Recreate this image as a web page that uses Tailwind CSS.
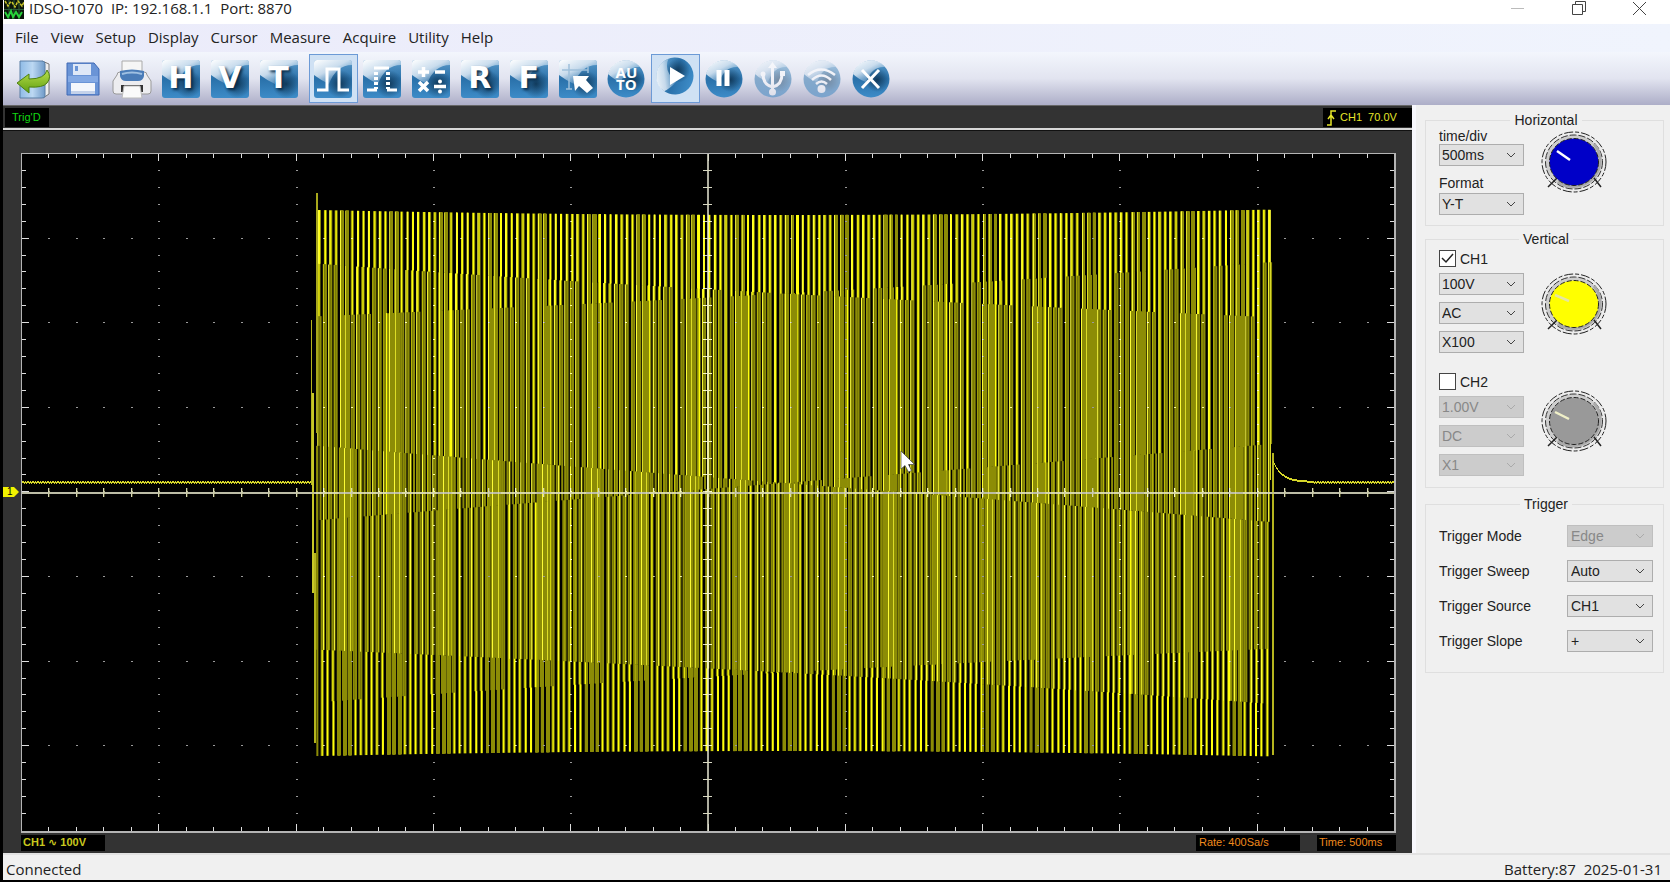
<!DOCTYPE html>
<html lang="en">

<head>
    <meta charset="UTF-8">
    <meta name="viewport" content="width=device-width, initial-scale=1.0">
    <title>IDSO-1070</title>
    <script src="https://cdn.jsdelivr.net/npm/@tailwindcss/browser@4"></script>
</head>

<body class="h-screen flex flex-col overflow-hidden bg-black pl-[3px] pb-[2px] font-['Open_Sans',sans-serif] text-[#222]">
    <!-- Shared gradients and shapes for the toolbar icons -->
    <svg class="absolute w-0 h-0" aria-hidden="true">
        <defs>
            <linearGradient id="blue" x1="0" y1="0" x2="0" y2="1">
                <stop offset="0" stop-color="#5a9aca" />
                <stop offset="0.5" stop-color="#2a71aa" />
                <stop offset="1" stop-color="#3d8cc8" />
            </linearGradient>
            <linearGradient id="gloss" x1="0" y1="0" x2="0.8" y2="1">
                <stop offset="0" stop-color="#fff" />
                <stop offset="0.45" stop-color="#dfeaf5" stop-opacity="0.85" />
                <stop offset="1" stop-color="#8ab8dc" stop-opacity="0" />
            </linearGradient>
            <radialGradient id="shade">
                <stop offset="0" stop-color="#0a2c48" stop-opacity="0.8" />
                <stop offset="1" stop-color="#0a2c48" stop-opacity="0" />
            </radialGradient>
            <linearGradient id="door" x1="0" y1="0" x2="1" y2="0">
                <stop offset="0" stop-color="#8fbbe6" />
                <stop offset="0.5" stop-color="#bcd8f2" />
                <stop offset="1" stop-color="#6f9ac8" />
            </linearGradient>
            <linearGradient id="green" x1="0" y1="0" x2="0" y2="1">
                <stop offset="0" stop-color="#b9e04a" />
                <stop offset="1" stop-color="#5f9e12" />
            </linearGradient>
            <symbol id="tile" viewBox="0 0 38 38">
                <rect x="0" y="0" width="38" height="38" rx="3" fill="url(#blue)" />
                <circle cx="26" cy="24" r="14" fill="url(#shade)" />
                <path d="M0 15V3Q0 0 3 0H35Q38 0 38 3V5Q22 5 15 24Q8 21 0 15Z" fill="url(#gloss)" />
            </symbol>
            <symbol id="disc" viewBox="0 0 38 38">
                <circle cx="19" cy="19" r="18.500" fill="url(#blue)" />
                <circle cx="25" cy="20" r="12" fill="url(#shade)" />
                <path d="M1 14A18.500 18.500 0 0 1 33 7Q20 6 14 22Q6 19 1 14Z" fill="url(#gloss)" />
            </symbol>
            <symbol id="knob" viewBox="0 0 68 68">
                <ellipse cx="34" cy="34" rx="32" ry="30" fill="#ececec" stroke="#222" stroke-dasharray="9 2 4 2" />
                <ellipse cx="34" cy="34" rx="28.500" ry="27" fill="#cdcdcd" stroke="#333" stroke-dasharray="7 2" />
                <path d="M54 16A27 26 0 0 1 18 54" fill="none" stroke="#aaa" stroke-width="3" />
                <path d="M17 50L8 59M54 50L61 59" stroke="#222" stroke-width="1.500" />
                <ellipse cx="34" cy="34" rx="24.500" ry="23.500" fill="currentColor" stroke="#222" stroke-dasharray="5 2" />
            </symbol>
        </defs>
    </svg>

    <!-- Title bar -->
    <header class="h-6 shrink-0 flex items-start justify-between bg-white">
        <div class="flex">
            <svg class="w-5 h-[19px] mx-px" viewBox="0 0 20 19" fill="none">
                <rect width="20" height="19" fill="#0b160b" />
                <path d="M0 9.500H20M10 0V19M5 0V19M15 0V19" stroke="#2c5a38" />
                <path d="M1 1L4 6L7 1M8 2L11 7L14 1L18 6L20 2" stroke="#c9c52a" stroke-width="1.500" stroke-dasharray="3 1" />
                <path d="M1 12L4 17L7 11L9 17L12 12L15 17L18 12" stroke="#28d23a" stroke-width="2" />
            </svg>
            <h1 class="pl-1 text-[15px] leading-[17px] whitespace-pre">IDSO-1070  IP: 192.168.1.1  Port: 8870</h1>
        </div>
        <div class="flex">
            <button class="w-[61px] h-4 grid place-items-center" aria-label="Minimize">
                <svg class="w-4 h-4" viewBox="0 0 16 16"><path d="M1 8.500H14" stroke="#bbb" /></svg>
            </button>
            <button class="w-[61px] h-4 grid place-items-center" aria-label="Restore">
                <svg class="w-4 h-4" viewBox="0 0 16 16" fill="none" stroke="#444"><path d="M1.500 4.500H11.500V14.500H1.500ZM4.500 4.500V1.500H14.500V11.500H11.500" /></svg>
            </button>
            <button class="w-[61px] h-4 grid place-items-center" aria-label="Close">
                <svg class="w-4 h-4" viewBox="0 0 16 16" stroke="#444"><path d="M1 2L14 15M14 2L1 15" /></svg>
            </button>
        </div>
    </header>

    <!-- Menu -->
    <nav class="h-7 shrink-0 flex items-center gap-3 pl-3 pb-[2px] bg-linear-to-r from-[#ebebfa] to-[#f0f4fd] text-[15px]">
        <button>File</button>
        <button>View</button>
        <button>Setup</button>
        <button>Display</button>
        <button>Cursor</button>
        <button>Measure</button>
        <button>Acquire</button>
        <button>Utility</button>
        <button>Help</button>
    </nav>

    <!-- Toolbar -->
    <div class="h-[53px] shrink-0 flex items-center pl-[7px] bg-linear-to-b from-[#f3f6fd] via-[#e2e4f0] to-[#adaec8] text-white">
        <div class="w-[293px] h-[49px] grid grid-cols-6">
            <button class="grid place-items-center" aria-label="Exit">
                <svg class="w-9 h-10" viewBox="0 0 36 40">
                    <path d="M26 2L33 5V35L27 39Z" fill="#eee" stroke="#777" />
                    <path d="M4 2H26Q29 2 29 5V37Q29 39 26 39H4Z" fill="url(#door)" stroke="#5b7fa5" />
                    <path d="M1 24L13 15V20Q29 20 31 11Q36 18 31 24Q27 29 13 28V34Z" fill="url(#green)" stroke="#4d8010" />
                </svg>
            </button>
            <button class="grid place-items-center" aria-label="Save">
                <svg class="w-9 h-9" viewBox="0 0 36 36">
                    <path d="M2 2H29L34 8V34H2Z" fill="#6a94d6" stroke="#3f68b4" />
                    <path d="M8 3H26V14H8Z" fill="#dfe8f7" />
                    <path d="M10 5H13V10H10Z" fill="#6a94d6" />
                    <path d="M3 15H33V21H3Z" fill="#83a9e4" />
                    <path d="M6 22H30V33H6Z" fill="#f4f7fc" />
                    <path d="M6 30H30V33H6Z" fill="#c4d2ea" />
                </svg>
            </button>
            <button class="grid place-items-center" aria-label="Print">
                <svg class="w-10 h-10" viewBox="0 0 40 40">
                    <path d="M10 2H30V18H10Z" fill="#f6f6f6" stroke="#aaa" />
                    <path d="M5 16Q5 13 8 13H32Q35 13 35 16L39 22V32Q39 35 36 35H4Q1 35 1 32V22Z" fill="#ededf0" stroke="#999" />
                    <path d="M8 12Q20 9 32 12V17Q31 22 26 22H14Q9 22 8 17Z" fill="#4a7cb8" />
                    <path d="M10 15Q20 12 30 15" stroke="#9fc0e2" stroke-width="2" fill="none" />
                    <path d="M9 26H31V33H9Z" fill="#333" />
                    <path d="M12 27H28L30 39H10Z" fill="#fafafa" stroke="#bbb" />
                </svg>
            </button>
            <button class="relative grid place-items-center" aria-label="Horizontal">
                <svg class="w-[38px] h-[38px]"><use href="#tile" /></svg>
                <span class="absolute font-['DejaVu_Sans'] text-3xl leading-none font-bold pb-[2px] text-shadow-[2px_2px_3px_#0a2c48]">H</span>
            </button>
            <button class="relative grid place-items-center" aria-label="Vertical">
                <svg class="w-[38px] h-[38px]"><use href="#tile" /></svg>
                <span class="absolute font-['DejaVu_Sans'] text-3xl leading-none font-bold pb-[2px] text-shadow-[2px_2px_3px_#0a2c48]">V</span>
            </button>
            <button class="relative grid place-items-center" aria-label="Trigger">
                <svg class="w-[38px] h-[38px]"><use href="#tile" /></svg>
                <span class="absolute font-['DejaVu_Sans'] text-3xl leading-none font-bold pb-[2px] text-shadow-[2px_2px_3px_#0a2c48]">T</span>
            </button>
        </div>
        <div class="w-[586px] h-[49px] ml-[6px] grid grid-cols-12">
            <button class="grid place-items-center border border-[#6c9ad6] bg-[#cfe1f4]" aria-label="Line display">
                <svg class="w-[38px] h-[38px]" viewBox="0 0 38 38">
                    <use href="#tile" />
                    <path d="M3 30H13V9H25V30H35" fill="none" stroke="#fff" stroke-width="3" />
                </svg>
            </button>
            <button class="grid place-items-center" aria-label="Dot display">
                <svg class="w-[38px] h-[38px]" viewBox="0 0 38 38">
                    <use href="#tile" />
                    <path d="M4 30H14M24 30H34M11 8H26" stroke="#fff" stroke-width="3" />
                    <path d="M13 12V29M25 12V29" stroke="#fff" stroke-width="4" stroke-dasharray="3 2" />
                </svg>
            </button>
            <button class="grid place-items-center" aria-label="Math">
                <svg class="w-[38px] h-[38px]" viewBox="0 0 38 38">
                    <use href="#tile" />
                    <path d="M6 12H17M11.500 7V17M23 12H33M7 22L16 31M16 22L7 31M22 26.500H34" stroke="#fff" stroke-width="3.500" />
                    <circle cx="28" cy="21.500" r="2" fill="#fff" />
                    <circle cx="28" cy="31.500" r="2" fill="#fff" />
                </svg>
            </button>
            <button class="relative grid place-items-center" aria-label="Reference">
                <svg class="w-[38px] h-[38px]"><use href="#tile" /></svg>
                <span class="absolute font-['DejaVu_Sans'] text-3xl leading-none font-bold pb-[2px] text-shadow-[2px_2px_3px_#0a2c48]">R</span>
            </button>
            <button class="relative grid place-items-center" aria-label="FFT">
                <svg class="w-[38px] h-[38px]"><use href="#tile" /></svg>
                <span class="absolute font-['DejaVu_Sans'] text-3xl leading-none font-bold pb-[2px] text-shadow-[2px_2px_3px_#0a2c48]">F</span>
            </button>
            <button class="grid place-items-center" aria-label="Cursor">
                <svg class="w-[38px] h-[38px]" viewBox="0 0 38 38">
                    <use href="#tile" />
                    <path d="M3 10H29M10 4V29M29 7V13M7 29H13" stroke="#9fc0da" stroke-width="1.500" />
                    <path d="M14 16L30 16L27 20L34 28L28 33L20 26L16 31Z" fill="#fff" />
                </svg>
            </button>
            <button class="relative grid place-items-center" aria-label="Auto">
                <svg class="w-[38px] h-[38px]"><use href="#disc" /></svg>
                <span class="absolute text-[15px] leading-3 font-bold pb-[2px]">AU<br>TO</span>
            </button>
            <button class="grid place-items-start justify-center pt-[2px] border border-[#6c9ad6] bg-[#cfe1f4]" aria-label="Run">
                <svg class="w-[38px] h-[38px]" viewBox="0 0 38 38">
                    <use href="#disc" transform="rotate(-70 19 19)" />
                    <path d="M14 10L29 19L14 28Z" fill="#fff" />
                </svg>
            </button>
            <button class="grid place-items-center" aria-label="Pause">
                <svg class="w-[38px] h-[38px]" viewBox="0 0 38 38">
                    <use href="#disc" />
                    <path d="M14 10V26M22 10V26" stroke="#fff" stroke-width="5" />
                </svg>
            </button>
            <button class="grid place-items-center opacity-50" aria-label="USB">
                <svg class="w-[38px] h-[38px]" viewBox="0 0 38 38" fill="none">
                    <use href="#disc" />
                    <path d="M18.500 6V32M18.500 27Q9 25 9 14M18.500 27Q28 25 28 14" stroke="#fff" stroke-width="3" />
                    <path d="M14 8L18.500 2L23 8ZM26 11H31V16H26Z" fill="#fff" />
                    <circle cx="9" cy="14" r="2.500" fill="#fff" />
                    <circle cx="18.500" cy="32" r="3.500" fill="#fff" />
                </svg>
            </button>
            <button class="grid place-items-center opacity-50" aria-label="WiFi">
                <svg class="w-[38px] h-[38px]" viewBox="0 0 38 38" fill="none">
                    <use href="#disc" />
                    <path d="M5 15Q18 4 32 15M9 20Q18.500 11 28 20M13 24Q18.500 19 24 24" stroke="#fff" stroke-width="2.500" />
                    <circle cx="18.500" cy="29" r="4" fill="#fff" />
                </svg>
            </button>
            <button class="grid place-items-center" aria-label="Disconnect">
                <svg class="w-[38px] h-[38px]" viewBox="0 0 38 38">
                    <use href="#disc" />
                    <path d="M10 10L27 28M27 10L10 28" stroke="#fff" stroke-width="3" />
                </svg>
            </button>
        </div>
    </div>

    <main class="flex-1 min-h-0 flex">
        <!-- Oscilloscope -->
        <section class="flex-1 min-w-0 flex flex-col bg-[#333] font-['Liberation_Sans',sans-serif] text-[11px]">
            <div class="h-[23px] shrink-0 flex justify-between pl-[2px] pt-[2px] pb-px border-t border-[#666]">
                <span class="w-11 bg-black pl-[7px] leading-[19px] text-[#12d812]">Trig'D</span>
                <span class="w-[89px] bg-black flex items-center pl-1 text-[#e6e62a]">
                    <svg class="w-[10px] h-4 mr-[3px]" viewBox="0 0 10 16" fill="none" stroke="#e6e62a" stroke-width="1.500">
                        <path d="M0 15H4V1H9M1 9L4 5L7 9" />
                    </svg>
                    CH1&nbsp; 70.0V
                </span>
            </div>
            <div class="h-[3px] shrink-0 bg-[#d8d8d8] border-b border-[#111]"></div>
            <div class="relative flex-1 min-h-0 flex flex-col pl-[18px] pr-4 pt-[22px]">
                <canvas id="screen" class="flex-1 min-h-0 w-full bg-black" width="1375" height="680"></canvas>
                <div class="h-[18px] shrink-0 mt-[2px] pb-[2px] flex text-[#f08a1c]">
                    <span class="w-[84px] bg-black pl-[2px] leading-[15px] font-bold text-[#c8c81e]">CH1 <span class="font-['DejaVu_Sans']">∿</span> 100V</span>
                    <span class="w-[104px] ml-auto bg-black pl-[3px] leading-[15px]">Rate: 400Sa/s</span>
                    <span class="w-[79px] ml-[17px] bg-black pl-[2px] leading-[15px]">Time: 500ms</span>
                </div>
                <!-- Channel 1 ground marker -->
                <div class="absolute left-0 top-[355px] w-4 h-3">
                    <svg class="absolute w-4 h-3" viewBox="0 0 16 12"><path d="M0 1H11L16 6L11 11H0Z" fill="#f2f200" /></svg>
                    <span class="absolute left-1 text-[10px] leading-3 text-black">1</span>
                </div>
                <!-- Mouse pointer -->
                <svg class="absolute left-[897px] top-[319px] w-4 h-6" viewBox="0 0 16 24">
                    <path d="M1 1V19L5 15.500L8.500 22L11.500 20.500L8.500 14.500H14.500Z" fill="#fff" stroke="#444" stroke-width="0.700" />
                </svg>
            </div>
        </section>

        <!-- Control panel -->
        <aside class="w-[258px] shrink-0 bg-[#f0f0f0] border-l-4 border-[#f8f8fd] pl-[9px] pr-[6px] pt-[7px] font-['Liberation_Sans',sans-serif] text-sm leading-4">
            <fieldset class="h-[114px] border border-[#dfdfdf] pl-[13px] pr-[10px] flex">
                <legend class="mx-auto px-1">Horizontal</legend>
                <div class="w-[85px] shrink-0">
                    <label for="timeDiv" class="block">time/div</label>
                    <div class="relative h-[22px]">
                        <select id="timeDiv" class="appearance-none w-full h-full border border-[#adadad] bg-[#e1e1e1] pl-[2px]"><option>500ms</option></select>
                        <svg class="absolute right-2 top-2 w-[10px] h-[6px] pointer-events-none" viewBox="0 0 10 6" fill="none" stroke="#444"><path d="M1 1L5 5L9 1" /></svg>
                    </div>
                    <label for="format" class="block mt-[9px]">Format</label>
                    <div class="relative h-[22px] mt-[2px]">
                        <select id="format" class="appearance-none w-full h-full border border-[#adadad] bg-[#e1e1e1] pl-[2px]"><option>Y-T</option></select>
                        <svg class="absolute right-2 top-2 w-[10px] h-[6px] pointer-events-none" viewBox="0 0 10 6" fill="none" stroke="#444"><path d="M1 1L5 5L9 1" /></svg>
                    </div>
                </div>
                <svg class="w-[68px] h-[68px] shrink-0 ml-4 text-[#0000c8]" viewBox="0 0 68 68">
                    <use href="#knob" />
                    <path d="M17 23L30 32" stroke="#fff" stroke-width="2.500" />
                </svg>
            </fieldset>

            <fieldset class="h-[257px] mt-[5px] border border-[#dfdfdf] pl-[13px] pr-[10px]">
                <legend class="mx-auto px-1">Vertical</legend>
                <div class="flex pt-[3px]">
                    <div class="w-[85px] shrink-0">
                        <label class="flex items-center h-[17px] mb-[6px]">
                            <span class="relative w-[17px] h-[17px] mr-1">
                                <input type="checkbox" checked class="peer appearance-none block w-[17px] h-[17px] border border-[#444] bg-white">
                                <svg class="absolute inset-0 w-[17px] h-[17px] hidden peer-checked:block" viewBox="0 0 17 17" fill="none" stroke="#222" stroke-width="1.500"><path d="M3 8L7 12L14 4" /></svg>
                            </span>
                            CH1
                        </label>
                        <div class="flex flex-col gap-[7px]">
                            <div class="relative h-[22px]">
                                <select aria-label="CH1 volts/div" class="appearance-none w-full h-full border border-[#adadad] bg-[#e1e1e1] pl-[2px]"><option>100V</option></select>
                                <svg class="absolute right-2 top-2 w-[10px] h-[6px] pointer-events-none" viewBox="0 0 10 6" fill="none" stroke="#444"><path d="M1 1L5 5L9 1" /></svg>
                            </div>
                            <div class="relative h-[22px]">
                                <select aria-label="CH1 coupling" class="appearance-none w-full h-full border border-[#adadad] bg-[#e1e1e1] pl-[2px]"><option>AC</option></select>
                                <svg class="absolute right-2 top-2 w-[10px] h-[6px] pointer-events-none" viewBox="0 0 10 6" fill="none" stroke="#444"><path d="M1 1L5 5L9 1" /></svg>
                            </div>
                            <div class="relative h-[22px]">
                                <select aria-label="CH1 probe" class="appearance-none w-full h-full border border-[#adadad] bg-[#e1e1e1] pl-[2px]"><option>X100</option></select>
                                <svg class="absolute right-2 top-2 w-[10px] h-[6px] pointer-events-none" viewBox="0 0 10 6" fill="none" stroke="#444"><path d="M1 1L5 5L9 1" /></svg>
                            </div>
                        </div>
                    </div>
                    <svg class="w-[68px] h-[68px] shrink-0 ml-4 mt-5 text-[#ffff00]" viewBox="0 0 68 68">
                        <use href="#knob" />
                        <path d="M15 25L29 31" stroke="#e6e6a0" stroke-width="2.500" />
                    </svg>
                </div>
                <div class="flex pt-5">
                    <div class="w-[85px] shrink-0">
                        <label class="flex items-center h-[17px] mb-[6px]">
                            <span class="relative w-[17px] h-[17px] mr-1">
                                <input type="checkbox" class="peer appearance-none block w-[17px] h-[17px] border border-[#444] bg-white">
                                <svg class="absolute inset-0 w-[17px] h-[17px] hidden peer-checked:block" viewBox="0 0 17 17" fill="none" stroke="#222" stroke-width="1.500"><path d="M3 8L7 12L14 4" /></svg>
                            </span>
                            CH2
                        </label>
                        <div class="flex flex-col gap-[7px]">
                            <div class="relative h-[22px]">
                                <select disabled aria-label="CH2 volts/div" class="appearance-none w-full h-full border border-[#bfbfbf] bg-[#ccc] text-[#888] opacity-100 pl-[2px]"><option>1.00V</option></select>
                                <svg class="absolute right-2 top-2 w-[10px] h-[6px] pointer-events-none" viewBox="0 0 10 6" fill="none" stroke="#aaa"><path d="M1 1L5 5L9 1" /></svg>
                            </div>
                            <div class="relative h-[22px]">
                                <select disabled aria-label="CH2 coupling" class="appearance-none w-full h-full border border-[#bfbfbf] bg-[#ccc] text-[#888] opacity-100 pl-[2px]"><option>DC</option></select>
                                <svg class="absolute right-2 top-2 w-[10px] h-[6px] pointer-events-none" viewBox="0 0 10 6" fill="none" stroke="#aaa"><path d="M1 1L5 5L9 1" /></svg>
                            </div>
                            <div class="relative h-[22px]">
                                <select disabled aria-label="CH2 probe" class="appearance-none w-full h-full border border-[#bfbfbf] bg-[#ccc] text-[#888] opacity-100 pl-[2px]"><option>X1</option></select>
                                <svg class="absolute right-2 top-2 w-[10px] h-[6px] pointer-events-none" viewBox="0 0 10 6" fill="none" stroke="#aaa"><path d="M1 1L5 5L9 1" /></svg>
                            </div>
                        </div>
                    </div>
                    <svg class="w-[68px] h-[68px] shrink-0 ml-4 mt-[14px] text-[#999]" viewBox="0 0 68 68">
                        <use href="#knob" />
                        <path d="M15 25L29 32" stroke="#f0f0c8" stroke-width="2.500" />
                    </svg>
                </div>
            </fieldset>

            <fieldset class="h-[177px] mt-[8px] border border-[#dfdfdf] pl-[13px] pr-[10px]">
                <legend class="mx-auto px-1">Trigger</legend>
                <div class="flex flex-col gap-[13px] pt-[13px]">
                    <div class="flex items-center justify-between">
                        <label for="trigMode">Trigger Mode</label>
                        <div class="relative w-[86px] h-[22px]">
                            <select disabled id="trigMode" class="appearance-none w-full h-full border border-[#bfbfbf] bg-[#ccc] text-[#888] opacity-100 pl-[3px]"><option>Edge</option></select>
                            <svg class="absolute right-2 top-2 w-[10px] h-[6px] pointer-events-none" viewBox="0 0 10 6" fill="none" stroke="#aaa"><path d="M1 1L5 5L9 1" /></svg>
                        </div>
                    </div>
                    <div class="flex items-center justify-between">
                        <label for="trigSweep">Trigger Sweep</label>
                        <div class="relative w-[86px] h-[22px]">
                            <select id="trigSweep" class="appearance-none w-full h-full border border-[#adadad] bg-[#e1e1e1] pl-[3px]"><option>Auto</option></select>
                            <svg class="absolute right-2 top-2 w-[10px] h-[6px] pointer-events-none" viewBox="0 0 10 6" fill="none" stroke="#444"><path d="M1 1L5 5L9 1" /></svg>
                        </div>
                    </div>
                    <div class="flex items-center justify-between">
                        <label for="trigSource">Trigger Source</label>
                        <div class="relative w-[86px] h-[22px]">
                            <select id="trigSource" class="appearance-none w-full h-full border border-[#adadad] bg-[#e1e1e1] pl-[3px]"><option>CH1</option></select>
                            <svg class="absolute right-2 top-2 w-[10px] h-[6px] pointer-events-none" viewBox="0 0 10 6" fill="none" stroke="#444"><path d="M1 1L5 5L9 1" /></svg>
                        </div>
                    </div>
                    <div class="flex items-center justify-between">
                        <label for="trigSlope">Trigger Slope</label>
                        <div class="relative w-[86px] h-[22px]">
                            <select id="trigSlope" class="appearance-none w-full h-full border border-[#adadad] bg-[#e1e1e1] pl-[3px]"><option>+</option></select>
                            <svg class="absolute right-2 top-2 w-[10px] h-[6px] pointer-events-none" viewBox="0 0 10 6" fill="none" stroke="#444"><path d="M1 1L5 5L9 1" /></svg>
                        </div>
                    </div>
                </div>
            </fieldset>
        </aside>
    </main>

    <!-- Status bar -->
    <footer class="h-[27px] shrink-0 flex items-center justify-between border-t-2 border-[#e2e2e2] bg-[#f0f0f0] pl-[3px] pr-2 pt-[2px] text-[15px] leading-5">
        <span>Connected</span>
        <span class="whitespace-pre">Battery:87  2025-01-31</span>
    </footer>

    <script>
        const canvas = document.getElementById('screen');
        const ctx = canvas.getContext('2d');
        const W = canvas.width, H = canvas.height;
        const divX = 137.3, divY = 84.6;
        const midX = 686, midY = 339;

        function rect(x, y, w, h, color) {
            ctx.fillStyle = color;
            ctx.fillRect(x, y, w, h);
        }

        // Dotted graticule: 10 x 8 divisions, 5 dots per division
        for (let i = 1; i < 10; i++) {
            for (let j = 1; j < 40; j++) {
                rect(Math.round(i * divX), Math.round(j * divY / 5), 2, 1, '#9a9a9a');
            }
        }
        for (let j = 1; j < 8; j++) {
            for (let i = 1; i < 50; i++) {
                rect(Math.round(i * divX / 5), Math.round(j * divY), 2, 1, '#9a9a9a');
            }
        }

        // Axes and frame ticks
        rect(midX, 0, 2, H, '#a0a0a0');
        rect(0, midY, W, 2, '#a0a0a0');
        for (let i = 1; i < 50; i++) {
            const x = Math.round(i * divX / 5);
            const len = i % 5 ? 4 : 7;
            rect(x, 1, 1, len, '#ddd');
            rect(x, H - 2 - len, 1, len, '#ddd');
            rect(x, midY - 4, 1, 9, '#ccc');
        }
        for (let j = 1; j < 40; j++) {
            const y = Math.round(j * divY / 5);
            const len = j % 5 ? 4 : 7;
            rect(1, y, len, 1, '#ddd');
            rect(W - 2 - len, y, len, 1, '#ddd');
            rect(midX - 4, y, 9, 1, '#ccc');
        }

        // Trace: 400 Sa/s, 50 Hz burst, each segment drawn as a vertical bar
        const step = 1373 / 2000;
        const start = 295, end = 1249;
        const grid = 1.074;
        const cores = ['#707030', '#303000', '#606030', '#101000', '#707030', '#505020', '#000000', '#686830', '#282800'];

        function sample(k) {
            const u = (k * step - 762) / 480;
            const drift = -u * 8 * Math.PI / 180;
            const amp = 268 + 8 * Math.min(1, u * u);
            return 330 - amp * Math.sin(k * Math.PI / 4 + drift);
        }

        ctx.globalCompositeOperation = 'lighten';
        for (let k = Math.ceil(start / step); k * step < end; k++) {
            const a = sample(k), b = sample(k + 1);
            const x = Math.round(k * step);
            if ((x - 315 + 496) % 49.6 < 14) {
                rect(x, Math.min(a, b), 3, Math.abs(a - b), '#8c8c06');
            }
        }

        for (let k = Math.ceil(start / step); k * step < end; k++) {
            const a = sample(k), b = sample(k + 1);
            const top = Math.min(a, b), height = Math.abs(a - b);
            const x = Math.round(k * step / grid) * grid;
            const block = (x - 315 + 496) % 49.6 < 14;
            ctx.globalCompositeOperation = block ? 'lighten' : 'lighter';
            rect(x, top, 2, height, '#8c8c06');
            if (k % 8 === 7 || k % 8 < 2) {
                ctx.globalCompositeOperation = 'lighter';
                rect(Math.round(x), top, 1, height, cores[Math.floor(k / 8) % 9]);
            }
        }
        ctx.globalCompositeOperation = 'source-over';

        // Edges of the burst
        rect(290, 167, 1, 165, '#b4b41e');
        rect(291, 240, 2, 200, '#c8c828');
        rect(293, 400, 2, 190, '#b4b41e');
        rect(295, 40, 2, 240, '#a8a81c');
        rect(1249, 57, 1, 270, '#d8d82c');
        rect(1251, 300, 2, 302, '#b4b41e');

        // Idle line before and after the burst
        for (let x = 1; x < 290; x++) {
            rect(x, 328 + (x * 7 % 5 < 2 ? 1 : 0), 1, 2, '#d6d62a');
        }
        for (let x = 1252; x < W - 2; x++) {
            const noise = x > 1292 && x * 7 % 5 < 2 ? 1 : 0;
            rect(x, Math.round(328 - 20 * Math.exp(-(x - 1252) / 9)) + noise, 1, 2, '#d6d62a');
        }

        // Axes stay visible through the trace
        ctx.globalAlpha = 0.3;
        rect(midX, 0, 2, H, '#d0d0a0');
        for (let j = 1; j < 40; j++) rect(midX - 4, Math.round(j * divY / 5), 9, 1, '#f0f0b0');
        for (let i = 1; i < 50; i++) rect(Math.round(i * divX / 5), midY - 4, 2, 9, '#f0f080');
        ctx.globalAlpha = 0.7;
        rect(0, midY, W, 2, '#c8c8a8');
        ctx.globalAlpha = 1;

        ctx.strokeStyle = '#b4b4b4';
        ctx.lineWidth = 2;
        ctx.strokeRect(0, 0, W - 1, H - 1);
    </script>
</body>

</html>
